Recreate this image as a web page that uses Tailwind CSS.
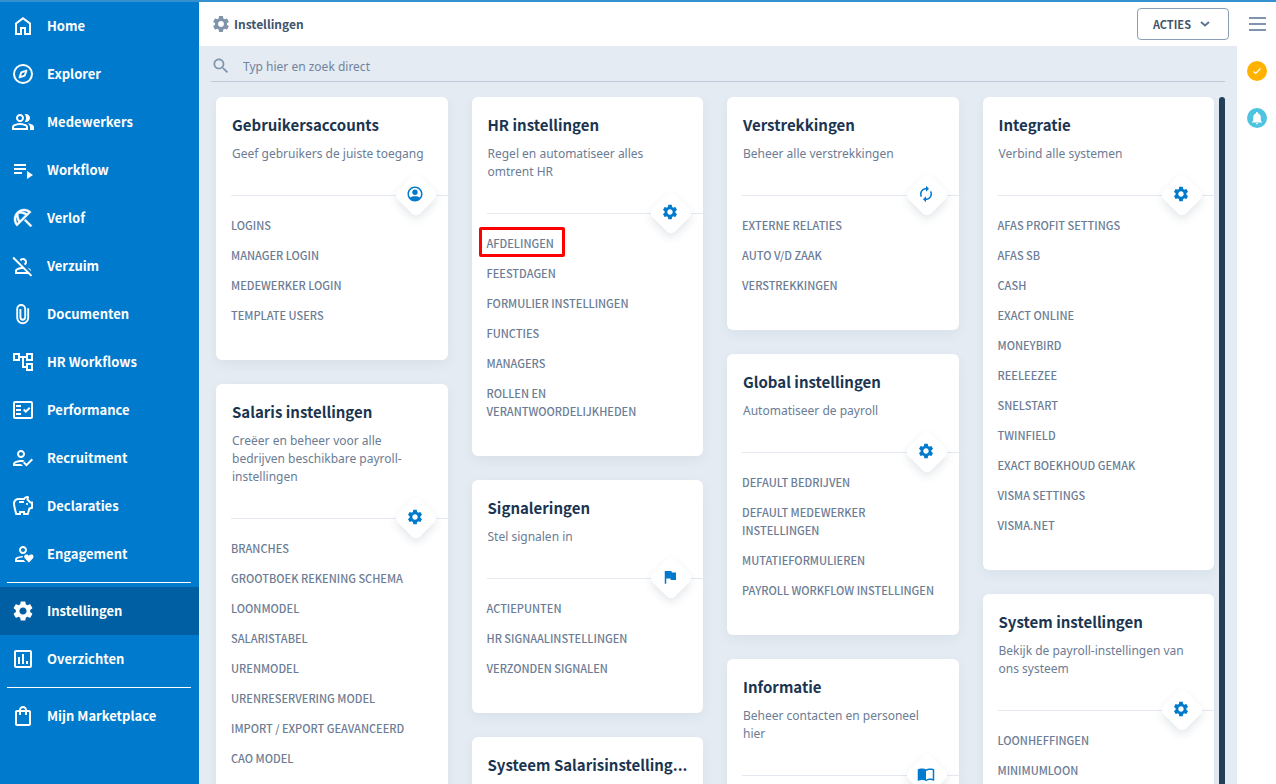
<!DOCTYPE html>
<html lang="nl">
  <head>
    <meta charset="UTF-8" />
    <meta name="viewport" content="width=device-width, initial-scale=1.0" />
    <title>Instellingen</title>
    <script src="https://cdn.jsdelivr.net/npm/@tailwindcss/browser@4"></script>
  </head>
  <body class="h-screen flex flex-col overflow-hidden border-t-2 border-[#3590cf] bg-white font-['Noto_Sans_CJK_SC',sans-serif]">
    <!-- Icon sprite -->
    <svg class="hidden">
      <symbol id="home" viewBox="0 0 24 24"><path d="M6 19h3v-6h6v6h3v-9l-6-4.5L6 10v9zm-2 2V9l8-6 8 6v12h-7v-6h-2v6H4z" /></symbol>
      <symbol id="explore" viewBox="0 0 24 24"><path d="M12 2a10 10 0 1 0 0 20 10 10 0 0 0 0-20zm0 18a8 8 0 1 1 0-16 8 8 0 0 1 0 16z" /><path d="M8.6 15.4l1.7-5.1 5.1-1.7-1.7 5.1z" fill="none" stroke="currentColor" stroke-width="1.9" stroke-linejoin="round" /></symbol>
      <symbol id="group" viewBox="0 -960 960 960"><path d="M40-160v-112q0-34 17.5-62.5T104-378q62-31 126-46.5T360-440q66 0 130 15.5T616-378q29 15 46.5 43.5T680-272v112H40Zm720 0v-120q0-44-24.5-84.5T666-434q51 6 96 20.5t84 35.5q36 20 55 44.5t19 53.5v120H760ZM360-480q-66 0-113-47t-47-113q0-66 47-113t113-47q66 0 113 47t47 113q0 66-47 113t-113 47Zm400-160q0 66-47 113t-113 47q-11 0-28-2.5t-28-5.5q27-32 41.5-71t14.5-81q0-42-14.5-81T544-792q14-5 28-6.5t28-1.5q66 0 113 47t47 113ZM120-240h480v-32q0-11-5.5-20T580-306q-54-27-109-40.5T360-360q-56 0-111 13.5T140-306q-9 5-14.5 14t-5.5 20v32Zm240-320q33 0 56.5-23.5T440-640q0-33-23.5-56.5T360-720q-33 0-56.5 23.5T280-640q0 33 23.5 56.5T360-560Z" /></symbol>
      <symbol id="playlist" viewBox="0 0 24 24"><path d="M3 10h12v2H3zM3 6h12v2H3zM3 14h8v2H3zM16 13v8l6-4z" /></symbol>
      <symbol id="beach" viewBox="0 0 24 24"><path stroke="currentColor" stroke-width=".4" d="M21 19.57 19.57 21l-6.44-6.43 1.43-1.43L21 19.57zM13.12 3c-2.58 0-5.16.98-7.14 2.95l-.01.01c-3.95 3.95-3.95 10.36 0 14.31l14.3-14.31C18.3 3.99 15.71 3 13.12 3zM6.14 17.27C5.4 16.03 5 14.61 5 13.12c0-.93.16-1.82.46-2.67.19 1.91.89 3.79 2.07 5.44l-1.39 1.38zm2.84-2.84C7.63 12.38 7.12 9.93 7.6 7.6c.58-.12 1.16-.18 1.75-.18 1.8 0 3.55.55 5.08 1.56l-5.45 5.45zm1.47-8.97c.85-.3 1.74-.46 2.67-.46 1.49 0 2.91.4 4.15 1.14l-1.39 1.39c-1.65-1.18-3.52-1.88-5.43-2.07z" /></symbol>
      <symbol id="person-off" viewBox="0 0 24 24"><path d="m20 17.17-3.37-3.38c.64.22 1.23.48 1.77.76.97.51 1.58 1.52 1.6 2.62zm1.19 4.02-1.41 1.41-2.61-2.6H4v-2.78c0-1.12.61-2.15 1.61-2.66 1.29-.66 2.87-1.22 4.67-1.45L1.39 4.22 2.8 2.81l18.39 18.38zM15.17 18l-3-3H12c-2.37 0-4.29.73-5.48 1.34-.32.16-.52.5-.52.88V18h9.17zM12 6c1.1 0 2 .9 2 2 0 .86-.54 1.59-1.3 1.87l1.48 1.48C15.28 10.64 16 9.4 16 8c0-2.21-1.79-4-4-4-1.41 0-2.64.73-3.35 1.82l1.48 1.48C10.41 6.54 11.14 6 12 6z" /></symbol>
      <symbol id="attach" viewBox="0 0 24 24"><path d="M17.2 6.2v9.6a5.5 5.5 0 0 1-11 0V7a4 4 0 0 1 8 0v8.3a2.4 2.4 0 0 1-4.8 0V7" fill="none" stroke="currentColor" stroke-width="1.9" /></symbol>
      <symbol id="tree" viewBox="0 0 24 24"><path d="M22 11V3h-7v3H9V3H2v8h7V8h2v10h4v3h7v-8h-7v3h-2V8h2v3h7zM7 9H4V5h3v4zm10 6h3v4h-3v-4zm0-10h3v4h-3V5z" /></symbol>
      <symbol id="fact-check" viewBox="0 0 24 24"><path d="M20 3H4c-1.1 0-2 .9-2 2v14c0 1.1.9 2 2 2h16c1.1 0 2-.9 2-2V5c0-1.1-.9-2-2-2zm0 16H4V5h16v14z" /><path d="M19.41 10.42 17.99 9l-3.17 3.17-1.41-1.42L12 12.16 14.82 15zM5 7h5v2H5V7zm0 4h5v2H5v-2zm0 4h5v2H5v-2z" /></symbol>
      <symbol id="recruit" viewBox="0 0 24 24"><path d="M10 12c2.21 0 4-1.79 4-4s-1.79-4-4-4-4 1.79-4 4 1.79 4 4 4zm0-6c1.1 0 2 .9 2 2s-.9 2-2 2-2-.9-2-2 .9-2 2-2zM4 18c.2-.9 2.9-2 6-2 .7 0 1.300.05 1.900.15l1.600-1.700C12.300 14.150 11.100 14 10 14c-2.670 0-8 1.340-8 4v2h10l-2-2H4zM20.600 12.500l-5.130 5.170-2.070-2.080L12 17l3.470 3.500L22 13.910z" /></symbol>
      <symbol id="savings" viewBox="0 0 24 24"><path d="M15 10c0-.55.45-1 1-1s1 .45 1 1-.45 1-1 1-1-.45-1-1zM8 9h5V7H8v2zm14-1.5v6.97l-2.82.94L17.5 21H12v-2h-2v2H4.500S2 12.540 2 9.500 4.460 4 7.500 4h5c.91-1.210 2.360-2 4-2 .83 0 1.500.670 1.500 1.500 0 .21-.04.4-.12.58-.14.34-.26.73-.32 1.150l2.270 2.270H22zm-2 2h-1l-3.500-3.500c0-.65.09-1.290.26-1.910-.97.25-1.760.97-2.090 1.910H7.500C5.570 6 4 7.570 4 9.500c0 1.880 1.220 6.650 2.010 9.500H8v-2h6v2h2.010l1.550-5.150 2.440-.82V9.500z" /></symbol>
      <symbol id="engage" viewBox="0 0 24 24"><path d="M12 12c2.210 0 4-1.790 4-4s-1.790-4-4-4-4 1.790-4 4 1.790 4 4 4zm0-6c1.100 0 2 .9 2 2s-.9 2-2 2-2-.9-2-2 .9-2 2-2zM6 18v-.6c0-.8 2.600-1.700 5.500-1.900.1-.6.3-1.100.6-1.500C9 14 4 15 4 17.400V20h10.500l-2-2H6z" /><path d="M17.900 20.500l-3.900-3.900c-1.700-1.800-.5-4 1.400-4 1 0 1.900.5 2.500 1.300.6-.8 1.500-1.300 2.400-1.300 2 0 3 2.200 1.500 4z" /></symbol>
      <symbol id="gear" viewBox="0 0 24 24"><path d="M19.140 12.940c.04-.3.06-.61.06-.94 0-.32-.02-.64-.07-.94l2.030-1.580c.18-.14.23-.41.12-.61l-1.920-3.320c-.12-.22-.37-.29-.59-.22l-2.390.96c-.5-.38-1.030-.7-1.620-.94l-.36-2.540c-.04-.24-.24-.41-.48-.41h-3.840c-.24 0-.43.17-.47.41l-.36 2.540c-.59.24-1.130.57-1.620.94l-2.390-.96c-.22-.08-.47 0-.59.22L2.740 8.870c-.12.21-.08.47.12.61l2.030 1.580c-.05.3-.09.63-.09.94s.02.64.07.94l-2.030 1.580c-.18.14-.23.41-.12.61l1.920 3.320c.12.22.37.29.59.22l2.390-.96c.5.38 1.030.7 1.620.94l.36 2.540c.05.24.24.41.48.41h3.840c.24 0 .44-.17.47-.41l.36-2.540c.59-.24 1.130-.56 1.620-.94l2.390.96c.22.08.47 0 .59-.22l1.920-3.320c.12-.22.07-.47-.12-.61l-2.010-1.580zM12 15.600c-1.980 0-3.600-1.620-3.600-3.600s1.620-3.600 3.600-3.600 3.600 1.620 3.600 3.600-1.620 3.600-3.600 3.600z" /></symbol>
      <symbol id="chart" viewBox="0 0 24 24"><path d="M19 3H5c-1.100 0-2 .9-2 2v14c0 1.100.9 2 2 2h14c1.100 0 2-.9 2-2V5c0-1.100-.9-2-2-2zm0 16H5V5h14v14zM7 10h2v7H7zM11 7h2v10h-2zM15 14h2v3h-2z" /></symbol>
      <symbol id="bag" viewBox="0 0 24 24"><path d="M18 6h-2c0-2.210-1.790-4-4-4S8 3.790 8 6H6c-1.100 0-2 .9-2 2v12c0 1.100.9 2 2 2h12c1.100 0 2-.9 2-2V8c0-1.100-.9-2-2-2zm-6-2c1.100 0 2 .9 2 2h-4c0-1.100.9-2 2-2zm6 16H6V8h2v3h2V8h4v3h2V8h2v12z" /></symbol>
      <symbol id="search" viewBox="0 0 24 24"><path d="M15.500 14h-.79l-.28-.27C15.410 12.590 16 11.110 16 9.500 16 5.910 13.090 3 9.500 3S3 5.910 3 9.500 5.910 16 9.500 16c1.610 0 3.090-.59 4.230-1.570l.27.28v.79l5 4.990L20.490 19l-4.990-5zm-6 0C7.010 14 5 11.990 5 9.500S7.010 5 9.500 5 14 7.010 14 9.500 11.990 14 9.500 14z" /></symbol>
      <symbol id="account" viewBox="0 0 24 24"><path d="M12 2C6.480 2 2 6.480 2 12s4.480 10 10 10 10-4.480 10-10S17.520 2 12 2zM5.500 16.700C4.600 15.400 4 13.800 4 12c0-4.410 3.590-8 8-8s8 3.590 8 8c0 1.800-.6 3.400-1.500 4.700C16.800 15.500 14.500 15 12 15s-4.800.5-6.500 1.700z" /><circle cx="12" cy="9.600" r="3.600" /></symbol>
      <symbol id="renew" viewBox="0 0 24 24"><path d="M12 6v3l4-4-4-4v3c-4.420 0-8 3.580-8 8 0 1.570.46 3.030 1.240 4.260L6.700 14.800c-.45-.83-.7-1.790-.7-2.800 0-3.310 2.690-6 6-6zm6.760 1.740L17.300 9.200c.44.84.7 1.790.7 2.800 0 3.310-2.690 6-6 6v-3l-4 4 4 4v-3c4.420 0 8-3.580 8-8 0-1.570-.46-3.030-1.240-4.260z" /></symbol>
      <symbol id="flag" viewBox="0 0 24 24"><path d="M14.400 6 14 4H5v17h2v-7h5.600l.4 2h7V6z" /></symbol>
      <symbol id="reader" viewBox="0 0 24 24"><path d="M21 5c-1.110-.35-2.330-.5-3.500-.5-1.950 0-4.050.4-5.500 1.500-1.450-1.100-3.550-1.500-5.500-1.500S2.450 4.900 1 6v14.650c0 .25.25.5.5.5.1 0 .15-.05.25-.05C3.100 20.450 5.050 20 6.500 20c1.950 0 4.050.4 5.500 1.500 1.350-.85 3.800-1.500 5.500-1.500 1.650 0 3.350.3 4.750 1.050.1.05.15.05.25.05.25 0 .5-.25.5-.5V6c-.6-.45-1.250-.75-2-1zm0 13.500c-1.100-.35-2.300-.5-3.500-.5-1.700 0-4.150.65-5.500 1.500V8c1.350-.85 3.800-1.500 5.500-1.500 1.200 0 2.400.15 3.500.5v11.500z" /></symbol>
    </svg>

    <div class="flex flex-1 min-h-0">
      <!-- Sidebar -->
      <nav id="sidebar" class="w-[199px] shrink-0 bg-[#007acc] text-white text-[13px] font-bold"></nav>

      <div class="flex-1 min-w-0 flex flex-col">
        <!-- Header -->
        <header class="h-11 shrink-0 flex items-center bg-white pl-3">
          <svg class="size-5 fill-[#8094ab]"><use href="#gear" /></svg>
          <h1 class="ml-[3px] text-xs font-bold text-[#42546b]">Instellingen</h1>
          <button class="ml-auto h-8 flex items-center rounded border border-[#8a9fb5] pl-[15px] pr-[18px] text-[11px] font-bold text-[#42546b]">
            ACTIES
            <svg class="ml-[9px] w-[10px] h-[6px]" viewBox="0 0 10 6" fill="none" stroke="#5f7590" stroke-width="2"><path d="M1 1l4 3.500 4-3.500" /></svg>
          </button>
          <div class="w-[47px] flex justify-end pr-[10px]">
            <button aria-label="Menu" class="w-[17px] flex flex-col gap-1">
              <span class="h-[2px] bg-[#8094ab]"></span>
              <span class="h-[2px] bg-[#8094ab]"></span>
              <span class="h-[2px] bg-[#8094ab]"></span>
            </button>
          </div>
        </header>

        <div class="flex flex-1 min-h-0">
          <main class="flex-1 min-w-0 flex flex-col bg-[#e4ebf3] px-3">
            <label class="h-9 pt-[5px] shrink-0 flex items-center gap-3 border-b border-[#c0cbda]">
              <svg class="size-5 fill-[#8094ab]"><use href="#search" /></svg>
              <input type="text" placeholder="Typ hier en zoek direct" class="flex-1 h-5 outline-none text-xs text-[#5f7590] placeholder:text-[#71839b] font-['Noto_Sans',sans-serif]" />
            </label>
            <div class="flex flex-1 min-h-0 mt-[15px] overflow-hidden">
              <div id="board" class="flex-1 min-w-0 grid grid-cols-4 gap-6 items-start pl-[5px] pr-[5px]"></div>
              <div class="w-[6px] shrink-0 rounded-t bg-[#243f58]"></div>
            </div>
          </main>

          <!-- Notifications -->
          <aside class="w-[39px] shrink-0 flex flex-col items-center gap-[27px] pt-[15px] bg-white">
            <button aria-label="Taken" class="size-5 rounded-full bg-[#ffb300] flex items-center justify-center">
              <svg class="size-[10px]" viewBox="0 0 10 10" fill="none" stroke="#fff" stroke-width="1.200"><path d="M1.500 5.500l2.200 2L8.500 2.500" /></svg>
            </button>
            <button aria-label="Meldingen" class="size-5 rounded-full bg-[#4ec4e0] flex items-center justify-center">
              <svg class="size-[14px] fill-white" viewBox="0 0 24 24"><path d="M12 23c1.100 0 2-.9 2-2h-4c0 1.100.9 2 2 2zm6.500-6v-6c0-3.300-1.700-6-4.700-6.700V3.500c0-1-.8-1.800-1.800-1.800s-1.800.8-1.800 1.800v.8C7.200 5 5.500 7.700 5.500 11v6L3.500 18.500v1h17v-1z" /></svg>
            </button>
          </aside>
        </div>
      </div>
    </div>

    <script>
      // null draws a separator line
      const menu = [
        ['home', 'Home'], ['explore', 'Explorer'], ['group', 'Medewerkers'], ['playlist', 'Workflow'],
        ['beach', 'Verlof'], ['person-off', 'Verzuim'], ['attach', 'Documenten'], ['tree', 'HR Workflows'],
        ['fact-check', 'Performance'], ['recruit', 'Recruitment'], ['savings', 'Declaraties'], ['engage', 'Engagement'],
        null,
        ['gear', 'Instellingen'], ['chart', 'Overzichten'],
        null,
        ['bag', 'Mijn Marketplace'],
      ];

      const columns = [
        [
          { title: 'Gebruikersaccounts', text: 'Geef gebruikers de juiste toegang', icon: 'account', links: ['Logins', 'Manager login', 'Medewerker login', 'Template users'] },
          { title: 'Salaris instellingen', text: 'Creëer en beheer voor alle bedrijven beschikbare payroll-instellingen', icon: 'gear', links: ['Branches', 'Grootboek rekening schema', 'Loonmodel', 'Salaristabel', 'Urenmodel', 'Urenreservering model', 'Import / export geavanceerd', 'CAO model'] },
        ],
        [
          { title: 'HR instellingen', text: 'Regel en automatiseer alles omtrent HR', icon: 'gear', links: ['Afdelingen', 'Feestdagen', 'Formulier instellingen', 'Functies', 'Managers', 'Rollen en verantwoordelijkheden'] },
          { title: 'Signaleringen', text: 'Stel signalen in', icon: 'flag', links: ['Actiepunten', 'HR signaalinstellingen', 'Verzonden signalen'] },
          { title: 'Systeem Salarisinstelling...', text: '', icon: 'gear', links: [] },
        ],
        [
          { title: 'Verstrekkingen', text: 'Beheer alle verstrekkingen', icon: 'renew', links: ['Externe relaties', 'Auto v/d zaak', 'Verstrekkingen'] },
          { title: 'Global instellingen', text: 'Automatiseer de payroll', icon: 'gear', links: ['Default bedrijven', 'Default medewerker instellingen', 'Mutatieformulieren', 'Payroll workflow instellingen'] },
          { title: 'Informatie', text: 'Beheer contacten en personeel hier', icon: 'reader', links: [] },
        ],
        [
          { title: 'Integratie', text: 'Verbind alle systemen', icon: 'gear', links: ['AFAS Profit settings', 'AFAS SB', 'Cash', 'Exact online', 'Moneybird', 'Reeleezee', 'Snelstart', 'Twinfield', 'Exact boekhoud gemak', 'Visma settings', 'Visma.net'] },
          { title: 'System instellingen', text: 'Bekijk de payroll-instellingen van ons systeem', icon: 'gear', links: ['Loonheffingen', 'Minimumloon'] },
        ],
      ];

      const marked = 'Afdelingen';

      function menuItem(item) {
        if (!item) return '<hr class="my-1 ml-[7px] mr-2 border-white" />';
        const [icon, label] = item;
        const active = label === 'Instellingen' ? 'bg-[#005fa3]' : '';
        return `
          <a href="#" class="h-12 flex items-center gap-3 pl-[11px] ${active}">
            <svg class="size-6 fill-current"><use href="#${icon}" /></svg>${label}
          </a>`;
      }

      function cardLink(label) {
        const box = label === marked
          ? '<span class="absolute -left-2 -right-[11px] -top-[7px] -bottom-[5px] border-3 border-[#ff0000] rounded-xs"></span>'
          : '';
        return `<li class="leading-[18px]"><a href="#" class="relative inline-block uppercase">${label}${box}</a></li>`;
      }

      function card(c) {
        return `
          <section class="bg-white rounded-md shadow-[0_4px_12px_rgba(36,63,88,0.06)] pt-[18px] pb-9">
            <h2 class="px-4 text-[15px] leading-5 font-bold text-[#1b3551] whitespace-nowrap">${c.title}</h2>
            <p class="mt-[10px] px-4 min-h-[18px] text-xs leading-[18px] text-[#6b7c95] font-['Noto_Sans',sans-serif]">${c.text}</p>
            <div class="relative mt-8 ml-[15px] -mr-1 h-px bg-[#e4e9f1]">
              <span class="absolute right-5 -top-4 size-8 rotate-45 rounded-md bg-white shadow-[3px_3px_8px_rgba(36,63,88,0.12)]"></span>
              <svg class="absolute right-7 -top-[10px] size-[18px] fill-[#007acc]"><use href="#${c.icon}" /></svg>
            </div>
            <ul class="mt-5 pl-[15px] pr-5 space-y-3 text-[11px] font-medium text-[#6b7c95]">${c.links.map(cardLink).join('')}</ul>
          </section>`;
      }

      document.getElementById('sidebar').innerHTML = menu.map(menuItem).join('');
      document.getElementById('board').innerHTML = columns
        .map(cards => `<div class="min-w-0 flex flex-col gap-6">${cards.map(card).join('')}</div>`)
        .join('');
    </script>
  </body>
</html>
